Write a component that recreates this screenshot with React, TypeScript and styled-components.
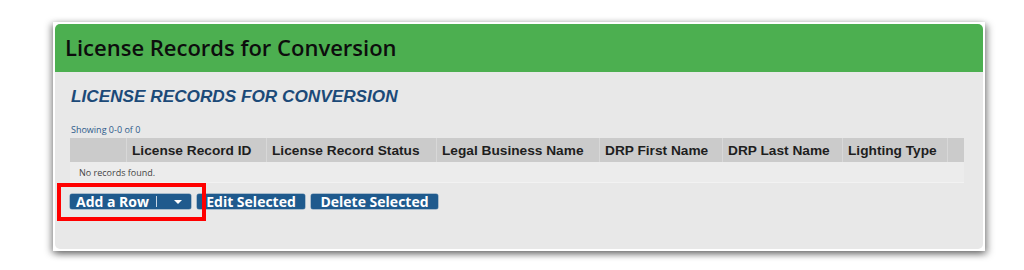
import React from "react";
import styled, { createGlobalStyle } from "styled-components";

const Global = createGlobalStyle`
  html, body { margin: 0; padding: 0; background: #ffffff; }
  body { font-family: "Liberation Sans", Arial, sans-serif; }
`;

const Page = styled.div`
  padding: 22px 0 0 53px;
  width: 1024px;
  height: 270px;
  box-sizing: border-box;
`;

const Frame = styled.div`
  width: 932px;
  height: 229px;
  box-sizing: border-box;
  padding: 2px;
  background: #ffffff;
  box-shadow: -2px 2px 7px rgba(0, 0, 0, 0.4), 3px 3px 7px rgba(0, 0, 0, 0.35);
  display: flex;
  flex-direction: column;
`;

const Header = styled.div`
  height: 48px;
  background: #4caf50;
  border-radius: 5px 5px 0 0;
  display: flex;
  align-items: center;
  padding-left: 10px;
  padding-bottom: 2px;
  box-sizing: border-box;
`;

const Title = styled.h1`
  margin: 0;
  font-family: "Open Sans", Lato, sans-serif;
  font-weight: 600;
  font-size: 22px;
  color: #0d0d0d;
`;

const Body = styled.div`
  flex: 1;
  background: #e8e8e8;
  border-radius: 0 0 5px 5px;
  padding: 14px 19px 0 15px;
  display: flex;
  flex-direction: column;
`;

const Subtitle = styled.h2`
  margin: 0 0 18px 1px;
  font-family: "Liberation Sans", Arial, sans-serif;
  font-style: italic;
  font-weight: 700;
  font-size: 17.2px;
  line-height: 20px;
  color: #1c4a78;
`;

const Showing = styled.div`
  font-family: "Open Sans", Lato, sans-serif;
  font-size: 9px;
  line-height: 11px;
  color: #2d5a8a;
  margin: 0 0 3px 1px;
`;

const Table = styled.div`
  width: 894px;
  display: flex;
  flex-direction: column;
`;

const HeadRow = styled.div`
  display: flex;
  height: 24px;
  background: #cbcbcb;
`;

const HeadCell = styled.div<{ $w: number }>`
  width: ${(p) => p.$w}px;
  box-sizing: border-box;
  border-right: 1px solid #d8d8d8;
  padding-left: 5px;
  display: flex;
  align-items: center;
  font-family: "Liberation Sans", Arial, sans-serif;
  font-weight: 700;
  font-size: 13.7px;
  color: #1e1e1e;
  white-space: nowrap;
  overflow: hidden;
  &:last-child { border-right: none; }
`;

const EmptyRow = styled.div`
  height: 21px;
  background: #ececec;
  border-bottom: 1px solid #f2f2f2;
  box-sizing: border-box;
  display: flex;
  align-items: center;
  padding-left: 9px;
  font-family: "Open Sans", Lato, sans-serif;
  font-size: 9px;
  color: #444444;
`;

const Actions = styled.div`
  display: flex;
  gap: 6px;
  margin-top: 11px;
  align-items: center;
`;

const Highlight = styled.div`
  position: relative;
  display: flex;
`;

const RedBox = styled.div`
  position: absolute;
  left: -13px;
  top: -11px;
  width: 149px;
  height: 38px;
  box-sizing: border-box;
  border: 4px solid #ff0000;
  pointer-events: none;
`;

const Button = styled.button<{ $w: number }>`
  width: ${(p) => p.$w}px;
  height: 15px;
  border: none;
  border-radius: 2px;
  background: #1f5a8d;
  color: #ffffff;
  font-family: "Open Sans", Lato, sans-serif;
  font-weight: 700;
  font-size: 14px;
  line-height: 15px;
  padding: 0;
  display: flex;
  align-items: center;
  justify-content: center;
  white-space: nowrap;
  box-shadow: 0 0 0 0.5px #6a8fb0;
`;

const SplitButton = styled(Button)`
  justify-content: flex-start;
  padding-left: 6px;
`;

const Divider = styled.span`
  width: 1px;
  height: 11px;
  background: #c8d6e4;
  margin-left: 7px;
`;

const Caret = styled.span`
  width: 0;
  height: 0;
  border-left: 4px solid transparent;
  border-right: 4px solid transparent;
  border-top: 4px solid #ffffff;
  margin-left: 17px;
`;

const columns = [
  { label: "", w: 57 },
  { label: "License Record ID", w: 140 },
  { label: "License Record Status", w: 170 },
  { label: "Legal Business Name", w: 163 },
  { label: "DRP First Name", w: 123 },
  { label: "DRP Last Name", w: 120 },
  { label: "Lighting Type", w: 105 },
  { label: "", w: 16 },
];

export default function App() {
  return (
    <>
      <Global />
      <Page>
        <Frame>
          <Header>
            <Title>License Records for Conversion</Title>
          </Header>
          <Body>
            <Subtitle>LICENSE RECORDS FOR CONVERSION</Subtitle>
            <Showing>Showing 0-0 of 0</Showing>
            <Table>
              <HeadRow>
                {columns.map((c, i) => (
                  <HeadCell key={i} $w={c.w}>
                    {c.label}
                  </HeadCell>
                ))}
              </HeadRow>
              <EmptyRow>No records found.</EmptyRow>
            </Table>
            <Actions>
              <Highlight>
                <SplitButton $w={121}>
                  Add a Row
                  <Divider />
                  <Caret />
                </SplitButton>
                <RedBox />
              </Highlight>
              <Button $w={108}>Edit Selected</Button>
              <Button $w={127}>Delete Selected</Button>
            </Actions>
          </Body>
        </Frame>
      </Page>
    </>
  );
}
